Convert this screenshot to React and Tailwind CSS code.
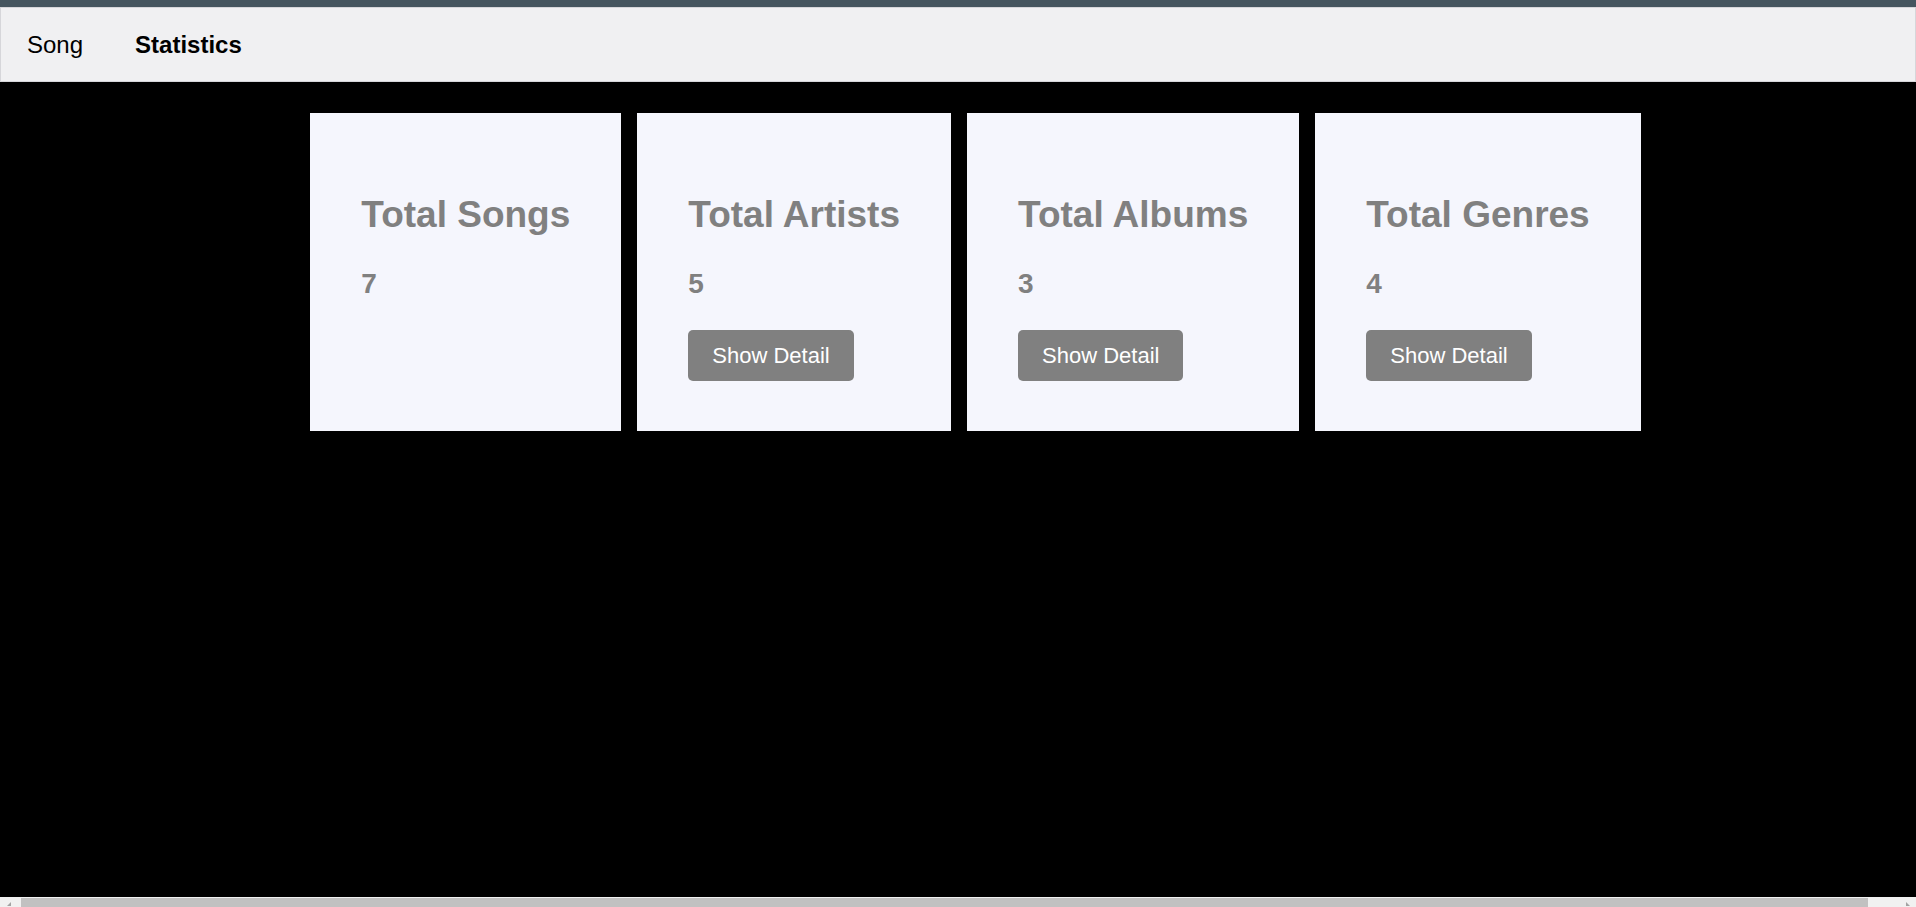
const stats = [
	{title: "Total Songs", value: 7, detail: false},
	{title: "Total Artists", value: 5, detail: true},
	{title: "Total Albums", value: 3, detail: true},
	{title: "Total Genres", value: 4, detail: true},
];

const StatCard = ({title, value, detail}) => (
	<div className="bg-[#f5f6fd] pt-[81px] pb-[50px] px-[51px] flex flex-col items-start">
		<h1 className="text-[37px] leading-[41px] font-bold text-[#808080] whitespace-nowrap">{title}</h1>
		<h3 className="mt-[33px] text-[28px] leading-[32px] font-bold text-[#808080]">{value}</h3>
		{detail && (
			<button className="mt-[30px] h-[51px] px-[24px] bg-[#808080] text-white text-[22px] rounded-[5px]">
				Show Detail
			</button>
		)}
	</div>
);

const App = () => {
	return (
		<div
			className="min-h-screen h-screen flex flex-col bg-black"
			style={{fontFamily: '"Liberation Sans", Arial, sans-serif'}}
		>
			{/* franja superior */}
			<div className="h-[7px] bg-[#45555f]" />
			<nav className="h-[75px] bg-[#f0f0f2] border border-[#d6d6da] flex items-center pl-[26px] gap-[52px] text-[24px] text-black">
				<a>Song</a>
				<a className="font-bold">Statistics</a>
			</nav>
			<main className="flex-1 flex justify-center items-start gap-[16px] pt-[31px] pl-[35px]">
				<div className="flex items-stretch gap-[16px]">
					{stats.map((s) => (
						<StatCard key={s.title} {...s} />
					))}
				</div>
			</main>
			{/* barra de desplazamiento */}
			<div className="h-[10px] flex bg-[#f1f1f1]">
				<div className="w-[17px] flex items-end justify-center pb-[1px]">
					<div className="w-0 h-0 border-l-[4px] border-l-transparent border-b-[4px] border-b-[#a3a3a3]" />
				</div>
				<div className="flex-1 flex items-stretch pl-[4px] pr-[31px] pt-[1px]">
					<div className="flex-1 bg-[#c1c1c1]" />
				</div>
				<div className="w-[17px] flex items-end justify-center pb-[1px]">
					<div className="w-0 h-0 border-r-[4px] border-r-transparent border-b-[4px] border-b-[#a3a3a3]" />
				</div>
			</div>
		</div>
	);
};

export default App;
